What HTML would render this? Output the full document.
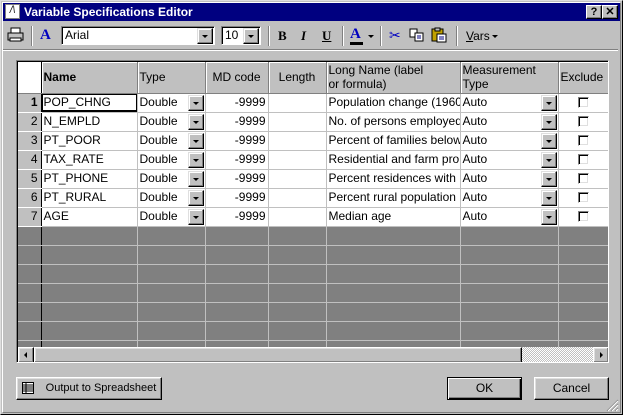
<!DOCTYPE html>
<html><head><meta charset="utf-8"><style>
*{margin:0;padding:0;box-sizing:border-box}
body{width:623px;height:415px;background:#c0c0c0;font-family:"Liberation Sans",Arial,sans-serif;font-size:12px;position:relative;overflow:hidden}
.win{position:absolute;left:0;top:0;width:623px;height:415px;border:1px solid;border-color:#dfdfdf #000 #000 #dfdfdf}
.win2{position:absolute;left:1px;top:1px;right:1px;bottom:1px;border:1px solid;border-color:#fff #808080 #808080 #fff}
.title{position:absolute;left:3px;top:3px;width:617px;height:18px;background:#000080;color:#fff;font-weight:bold;font-size:12px;line-height:18px;padding-left:21px}
.tb{position:absolute;width:16px;height:14px;background:#c0c0c0;border:1px solid;border-color:#fff #000 #000 #fff;box-shadow:inset -1px -1px #808080;color:#000;font-size:11px;line-height:12px;text-align:center;font-weight:bold}
.abs{position:absolute}
.sep{position:absolute;top:26px;width:2px;height:20px;border-left:1px solid #808080;border-right:1px solid #fff}
.sunk{position:absolute;background:#fff;border:1px solid;border-color:#808080 #fff #fff #808080;box-shadow:inset 1px 1px #000}
.dd{position:absolute;width:16px;height:16px;background:#c0c0c0;border:1px solid;border-color:#dfdfdf #000 #000 #dfdfdf;box-shadow:inset -1px -1px #808080,inset 1px 1px #fff}
.dd:after{content:"";position:absolute;left:4px;top:6px;border-left:3px solid transparent;border-right:3px solid transparent;border-top:3px solid #000;width:0}
.grid{position:absolute;left:16px;top:60px;width:593px;height:303px;border:1px solid;border-color:#808080 #fff #fff #808080;background:#808080;overflow:hidden}
.gin{position:absolute;left:0;top:0;width:591px;height:301px;border-left:1px solid #000;border-top:1px solid #000;overflow:hidden}
table{border-collapse:collapse;table-layout:fixed;position:absolute;left:0;top:0;width:600px}
td{height:19px;border-right:1px solid #c0c0c0;border-bottom:1px solid #c0c0c0;padding:0 2px;white-space:nowrap;overflow:hidden;font-size:12px;position:relative;line-height:17px}
tr.h td{height:31px;background:#c0c0c0;border-right:1px solid #808080;border-bottom:1px solid #808080;box-shadow:inset 1px 1px #fff;line-height:14px;vertical-align:middle}
td.rn{background:#c0c0c0;text-align:right;border-right:1px solid #000;border-bottom:1px solid #fff;padding-right:3px}
tr.d td{background:#fff}
tr.d td.rn{background:#c0c0c0}
tr.g td{background:#808080;border-color:#c0c0c0}
tr.g td.rn{border-right:1px solid #000}
.r{text-align:right}
.cb{display:inline-block;width:11px;height:11px;border:1px solid;border-color:#808080 #fff #fff #808080;box-shadow:inset 1px 1px #000,inset -1px -1px #dfdfdf;background:#fff;vertical-align:middle}
.cdd{position:absolute;right:1px;top:1px;width:16px;height:16px}
.btn{position:absolute;background:#c0c0c0;border:1px solid;border-color:#fff #000 #000 #fff;box-shadow:inset -1px -1px #808080,inset 1px 1px #dfdfdf;text-align:center;font-size:12px;white-space:nowrap}
</style></head><body>
<div class="win"><div class="win2"></div></div>
<div class="title">Variable Specifications Editor</div>
<div class="abs" style="left:5px;top:4px;width:15px;height:15px;background:#fff;border:1px solid #808080;font-size:10px;line-height:12px;color:#000;text-align:center;font-style:italic">/\</div>
<div class="tb" style="left:586px;top:5px">?</div>
<div class="tb" style="left:602px;top:5px">✕</div>

<svg class="abs" style="left:7px;top:27px" width="18" height="16"><rect x="4" y="1" width="9" height="5" fill="#fff" stroke="#000"/><rect x="1" y="6" width="15" height="7" fill="#c0c0c0" stroke="#000"/><rect x="3" y="11" width="11" height="3" fill="#fff" stroke="#000"/></svg>
<div class="sep" style="left:31px"></div>
<div class="abs" style="left:40px;top:27px;color:#0000c0;font-family:'Liberation Serif',serif;font-weight:bold;font-size:15px">A</div>
<div class="sunk" style="left:61px;top:26px;width:154px;height:19px;padding:1px 3px;font-size:12px">Arial</div>
<div class="dd" style="left:197px;top:28px"></div>
<div class="sunk" style="left:221px;top:26px;width:40px;height:19px;padding:1px 3px;font-size:12px">10</div>
<div class="dd" style="left:243px;top:28px"></div>
<div class="sep" style="left:268px"></div>
<div class="abs" style="left:278px;top:28px;font-family:'Liberation Serif',serif;font-weight:bold;font-size:13px">B</div>
<div class="abs" style="left:301px;top:28px;font-family:'Liberation Serif',serif;font-weight:bold;font-style:italic;font-size:13px">I</div>
<div class="abs" style="left:322px;top:28px;font-family:'Liberation Serif',serif;font-weight:bold;font-size:13px;text-decoration:underline">U</div>
<div class="sep" style="left:342px"></div>
<div class="abs" style="left:350px;top:26px;color:#0000c0;font-family:'Liberation Serif',serif;font-weight:bold;font-size:15px">A</div>
<div class="abs" style="left:350px;top:42px;width:13px;height:3px;background:#000"></div>
<div class="abs" style="left:368px;top:35px;border-left:3px solid transparent;border-right:3px solid transparent;border-top:3px solid #000"></div>
<div class="sep" style="left:380px"></div>
<div class="abs" style="left:389px;top:27px;color:#0000c0;font-size:14px">✂</div>
<svg class="abs" style="left:409px;top:28px" width="16" height="15"><rect x="1" y="1" width="7" height="8" fill="#fff" stroke="#000"/><rect x="6" y="5" width="8" height="8" fill="#fff" stroke="#000"/><path d="M8 8h4M8 10h4" stroke="#000080"/></svg>
<svg class="abs" style="left:431px;top:27px" width="16" height="16"><rect x="1" y="2" width="11" height="12" fill="#c0a000" stroke="#000"/><rect x="4" y="1" width="5" height="3" fill="#c0c0c0" stroke="#000"/><rect x="6" y="7" width="9" height="8" fill="#fff" stroke="#000"/><path d="M8 10h5M8 12h5" stroke="#000080"/></svg>
<div class="sep" style="left:456px"></div>
<div class="abs" style="left:466px;top:29px;font-size:12px"><u>V</u>ars</div>
<div class="abs" style="left:492px;top:35px;border-left:3px solid transparent;border-right:3px solid transparent;border-top:3px solid #000"></div>
<div class="abs" style="left:3px;top:49px;width:615px;height:2px;border-top:1px solid #808080;border-bottom:1px solid #fff"></div>

<div class="grid"><div class="gin">
<table>
<colgroup><col style="width:23px"><col style="width:96px"><col style="width:68px"><col style="width:63px"><col style="width:58px"><col style="width:134px"><col style="width:98px"><col style="width:60px"></colgroup>
<tr class="h"><td style="background:#fff;box-shadow:none;border-right:1px solid #000"></td><td style="font-weight:bold">Name</td><td>Type</td><td style="text-align:center">MD code</td><td style="text-align:center">Length</td><td>Long Name (label<br>or formula)</td><td>Measurement<br>Type</td><td>Exclude</td></tr>
<tr class="d"><td class="rn" style="font-weight:bold">1</td><td style="box-shadow:inset 0 0 0 1px #000,inset 0 -2px #000">POP_CHNG</td><td>Double<span class="dd cdd"></span></td><td class="r">-9999</td><td></td><td>Population change (1960-1970)</td><td>Auto<span class="dd cdd"></span></td><td style="text-align:center;padding-right:12px"><span class="cb"></span></td></tr>
<tr class="d"><td class="rn">2</td><td>N_EMPLD</td><td>Double<span class="dd cdd"></span></td><td class="r">-9999</td><td></td><td>No. of persons employed</td><td>Auto<span class="dd cdd"></span></td><td style="text-align:center;padding-right:12px"><span class="cb"></span></td></tr>
<tr class="d"><td class="rn">3</td><td>PT_POOR</td><td>Double<span class="dd cdd"></span></td><td class="r">-9999</td><td></td><td>Percent of families below</td><td>Auto<span class="dd cdd"></span></td><td style="text-align:center;padding-right:12px"><span class="cb"></span></td></tr>
<tr class="d"><td class="rn">4</td><td>TAX_RATE</td><td>Double<span class="dd cdd"></span></td><td class="r">-9999</td><td></td><td>Residential and farm prop</td><td>Auto<span class="dd cdd"></span></td><td style="text-align:center;padding-right:12px"><span class="cb"></span></td></tr>
<tr class="d"><td class="rn">5</td><td>PT_PHONE</td><td>Double<span class="dd cdd"></span></td><td class="r">-9999</td><td></td><td>Percent residences with</td><td>Auto<span class="dd cdd"></span></td><td style="text-align:center;padding-right:12px"><span class="cb"></span></td></tr>
<tr class="d"><td class="rn">6</td><td>PT_RURAL</td><td>Double<span class="dd cdd"></span></td><td class="r">-9999</td><td></td><td>Percent rural population</td><td>Auto<span class="dd cdd"></span></td><td style="text-align:center;padding-right:12px"><span class="cb"></span></td></tr>
<tr class="d"><td class="rn">7</td><td>AGE</td><td>Double<span class="dd cdd"></span></td><td class="r">-9999</td><td></td><td>Median age</td><td>Auto<span class="dd cdd"></span></td><td style="text-align:center;padding-right:12px"><span class="cb"></span></td></tr>
<tr class="g"><td class="rn" style="background:#808080;border-bottom-color:#c0c0c0"></td><td></td><td></td><td></td><td></td><td></td><td></td><td></td></tr>
<tr class="g"><td class="rn" style="background:#808080;border-bottom-color:#c0c0c0"></td><td></td><td></td><td></td><td></td><td></td><td></td><td></td></tr>
<tr class="g"><td class="rn" style="background:#808080;border-bottom-color:#c0c0c0"></td><td></td><td></td><td></td><td></td><td></td><td></td><td></td></tr>
<tr class="g"><td class="rn" style="background:#808080;border-bottom-color:#c0c0c0"></td><td></td><td></td><td></td><td></td><td></td><td></td><td></td></tr>
<tr class="g"><td class="rn" style="background:#808080;border-bottom-color:#c0c0c0"></td><td></td><td></td><td></td><td></td><td></td><td></td><td></td></tr>
<tr class="g"><td class="rn" style="background:#808080;border-bottom-color:#c0c0c0"></td><td></td><td></td><td></td><td></td><td></td><td></td><td></td></tr>
<tr class="g"><td class="rn" style="background:#808080;border-bottom-color:#c0c0c0"></td><td></td><td></td><td></td><td></td><td></td><td></td><td></td></tr>
</table>
<div class="abs" style="left:0;top:285px;width:591px;height:16px;background:repeating-conic-gradient(#fff 0 25%,#c0c0c0 0 50%) 0 0/2px 2px"></div>
<div class="btn" style="left:0;top:285px;width:16px;height:16px"><div class="abs" style="left:5px;top:4px;border-top:3px solid transparent;border-bottom:3px solid transparent;border-right:3px solid #000"></div></div>
<div class="btn" style="left:16px;top:285px;width:488px;height:16px"></div>
<div class="btn" style="left:575px;top:285px;width:16px;height:16px"><div class="abs" style="left:6px;top:4px;border-top:3px solid transparent;border-bottom:3px solid transparent;border-left:3px solid #000"></div></div>
</div></div>

<div class="btn" style="left:16px;top:377px;width:146px;height:23px;line-height:21px;padding-left:24px;font-size:11px">Output to Spreadsheet</div>
<svg class="abs" style="left:22px;top:382px" width="12" height="12"><rect x="0.5" y="0.5" width="11" height="11" fill="#fff" stroke="#000"/><path d="M1 3h10M1 5h10M1 7h10M1 9h10M4 1v10" stroke="#000" stroke-width="1"/></svg>
<div class="btn" style="left:447px;top:377px;width:75px;height:23px;line-height:21px;border-color:#000;box-shadow:inset 1px 1px #fff,inset -1px -1px #000,inset -2px -2px #808080">OK</div>
<div class="btn" style="left:534px;top:377px;width:75px;height:23px;line-height:21px">Cancel</div>
<svg class="abs" style="left:606px;top:399px" width="13" height="13"><path d="M12 1L1 12M12 5L5 12M12 9L9 12" stroke="#808080"/><path d="M12 2L2 12M12 6L6 12M12 10L10 12" stroke="#fff"/></svg>
</body></html>
